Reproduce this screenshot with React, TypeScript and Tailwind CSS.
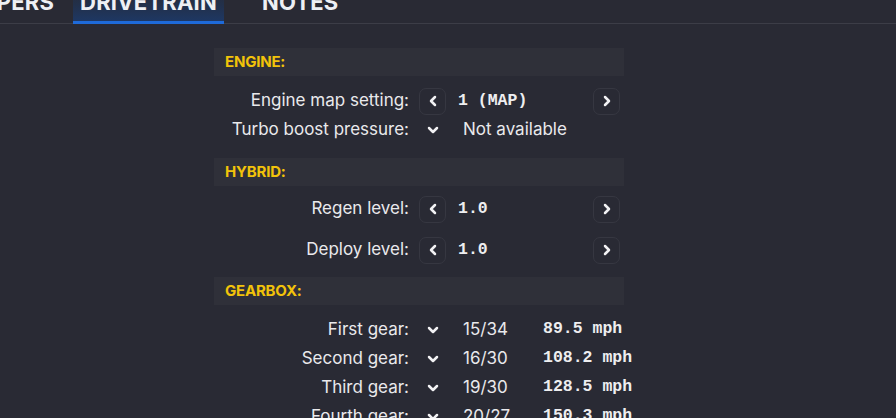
import React from "react";

const Chev = ({ dir }: { dir: "left" | "right" | "down" }) => {
  const d =
    dir === "left"
      ? "M9 3 L5 7 L9 11"
      : dir === "right"
      ? "M5 3 L9 7 L5 11"
      : "M3 5 L7 9 L11 5";
  return (
    <svg width="14" height="14" viewBox="0 0 14 14" fill="none">
      <path d={d} stroke="#f2f2f4" strokeWidth="2.5" strokeLinecap="round" strokeLinejoin="round" />
    </svg>
  );
};

const Btn = ({ dir }: { dir: "left" | "right" }) => (
  <div className="w-[27px] h-[27px] shrink-0 rounded-[7px] border border-[#363741] flex items-center justify-center">
    <Chev dir={dir} />
  </div>
);

const Header = ({ title }: { title: string }) => (
  <div className="h-[28px] bg-[#2f3039] flex items-center pl-[11px]">
    <span className="text-[15px] font-bold text-[#f2c30a] tracking-[-0.2px]">{title}</span>
  </div>
);

const Label = ({ children }: { children: React.ReactNode }) => (
  <div className="w-[196px] shrink-0 text-right text-[17px] text-[#e9e9ec] pr-[1px] whitespace-nowrap">{children}</div>
);

const mono = { fontFamily: '"Liberation Mono", "DejaVu Sans Mono", monospace' };

const StepRow = ({ label, value, h }: { label: string; value: string; h: string }) => (
  <div className={`flex items-center ${h}`}>
    <Label>{label}</Label>
    <div className="ml-[9px] shrink-0"><Btn dir="left" /></div>
    <div className="w-[147px] shrink-0 pl-[12px] text-[16.5px] font-bold text-[#eeeef0]" style={mono}>{value}</div>
    <Btn dir="right" />
  </div>
);

const DropRow = ({ label, value, speed }: { label: string; value: string; speed?: string }) => (
  <div className="flex items-center h-[29px]">
    <Label>{label}</Label>
    <div className="ml-[9px] w-[27px] shrink-0 flex justify-center"><Chev dir="down" /></div>
    <div className="w-[97px] shrink-0 pl-[17px] text-[17px] text-[#e9e9ec] whitespace-nowrap">{value}</div>
    {speed && (
      <div className="shrink-0 text-[16.5px] font-bold text-[#eeeef0] whitespace-nowrap" style={mono}>{speed}</div>
    )}
  </div>
);

export default function App() {
  return (
    <div
      className="w-[896px] h-[418px] overflow-hidden bg-[#292a34] text-white"
      style={{ fontFamily: 'Inter, "Noto Sans", sans-serif' }}
    >
      <div className="relative h-[24px] border-b border-[#3c3d47]">
        <div className="absolute left-0 top-[-14px] flex items-end h-[37px] text-[22px] font-bold text-[#eef0f4] tracking-[0.2px]">
          <div className="w-[54px] overflow-hidden flex justify-end h-full">
            <span className="whitespace-nowrap leading-[26px] pt-[3px]">PERS</span>
          </div>
          <div className="ml-[19px] w-[151px] h-full flex items-start justify-center relative bg-gradient-to-t from-[#1d3866] via-[#22304a] to-transparent">
            <span className="leading-[26px] pt-[3px]">DRIVETRAIN</span>
            <div className="absolute left-0 right-0 bottom-[-1px] h-[3px] bg-[#1e6ad9]"></div>
          </div>
          <div className="ml-[38px] h-full flex items-start">
            <span className="leading-[26px] pt-[3px]">NOTES</span>
          </div>
        </div>
      </div>

      <div className="ml-[214px] w-[410px] mt-[24px] flex flex-col">
        <Header title="ENGINE:" />
        <div className="mt-[11px]">
          <StepRow label="Engine map setting:" value="1 (MAP)" h="h-[28px]" />
          <div className="flex items-center h-[30px]">
            <Label>Turbo boost pressure:</Label>
            <div className="ml-[9px] w-[27px] shrink-0 flex justify-center"><Chev dir="down" /></div>
            <div className="pl-[17px] text-[17px] text-[#e9e9ec] whitespace-nowrap">Not available</div>
          </div>
        </div>

        <div className="mt-[13px]">
          <Header title="HYBRID:" />
        </div>
        <div className="mt-[9px]">
          <StepRow label="Regen level:" value="1.0" h="h-[28px]" />
        </div>
        <div className="mt-[13px]">
          <StepRow label="Deploy level:" value="1.0" h="h-[28px]" />
        </div>

        <div className="mt-[13px]">
          <Header title="GEARBOX:" />
        </div>
        <div className="mt-[10px]">
          <DropRow label="First gear:" value="15/34" speed="89.5 mph" />
          <DropRow label="Second gear:" value="16/30" speed="108.2 mph" />
          <DropRow label="Third gear:" value="19/30" speed="128.5 mph" />
          <DropRow label="Fourth gear:" value="20/27" speed="150.3 mph" />
        </div>
      </div>
    </div>
  );
}
